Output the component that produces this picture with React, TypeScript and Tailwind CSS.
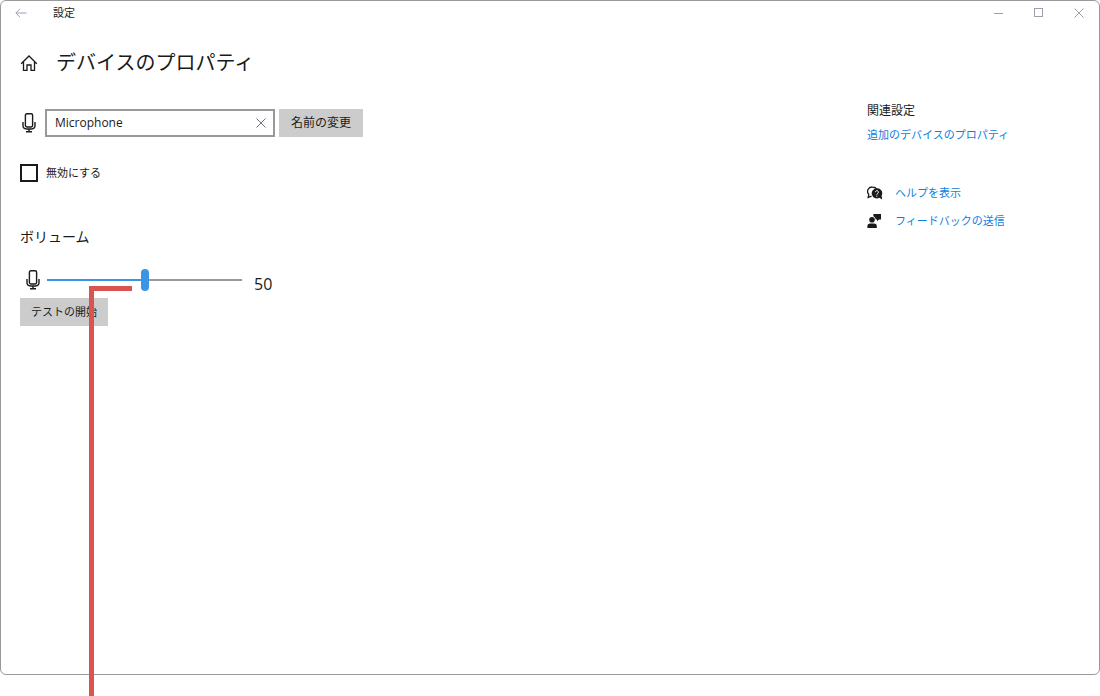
import { useState } from "react";

type IconProps = { className?: string };

function MicIcon({ className }: IconProps) {
  return (
    <svg viewBox="0 0 14 20" className={className} fill="none" stroke="currentColor" strokeWidth="1.4" aria-hidden="true">
      <rect x="3.4" y="0.8" width="7.2" height="13.2" rx="1.4" />
      <path d="M1 9v3.6a3.4 3.4 0 0 0 3.4 3.4h5.2a3.4 3.4 0 0 0 3.4-3.4V9M7 16v2.6M4 18.8h6" />
    </svg>
  );
}

function HomeIcon({ className }: IconProps) {
  return (
    <svg viewBox="0 0 18 18" className={className} fill="none" stroke="currentColor" strokeWidth="1.3" aria-hidden="true">
      <path d="M1.2 9.8 9 2l7.800 7.800M3.500 8v8.300h3.500v-5.300h4v5.300h3.500V8" />
    </svg>
  );
}

function HelpIcon({ className }: IconProps) {
  return (
    <svg viewBox="0 0 16 14" className={className} aria-hidden="true">
      <path d="M4.6 10.2 1.2 11.4l.6-3A4.4 4.4 0 0 1 5.4 1c2 0 3.400.8 4.200 2" fill="none" stroke="currentColor" strokeWidth="1.3" />
      <path d="M9.8 2.2a5.1 5.1 0 1 0 2.4 9.600l3 1.700-.6-3.800A5.1 5.1 0 0 0 9.800 2.200z" fill="currentColor" />
      <path d="M8.4 6.200a1.500 1.500 0 1 1 2.400 1.200c-.6.4-1 .6-1 1.300M9.800 9.600v1.100" fill="none" stroke="#fff" strokeWidth="1" />
    </svg>
  );
}

function FeedbackIcon({ className }: IconProps) {
  return (
    <svg viewBox="0 0 16 16" className={className} fill="currentColor" aria-hidden="true">
      <path d="M6.400 1h7.600v5.400h-2L10 8.200V6.400H8.800A4 4 0 0 0 6.400 3.200z" />
      <circle cx="5" cy="6.800" r="2.800" />
      <path d="M.4 15v-1.800a2.800 2.800 0 0 1 2.800-2.800h3.800a2.800 2.800 0 0 1 2.800 2.800V15z" />
    </svg>
  );
}

function TitleBar() {
  return (
    <header className="flex h-6 items-center text-gray-400">
      <button type="button" aria-label="戻る" className="ml-3 flex h-6 w-4 items-center justify-center">
        <svg viewBox="0 0 12 10" className="h-[10px] w-3" fill="none" stroke="currentColor">
          <path d="M11.5 5H1M5 .8.8 5 5 9.2" />
        </svg>
      </button>
      <span className="ml-6 grow text-[11px] text-[#1a1a1a]">設定</span>
      <button type="button" aria-label="最小化" className="flex h-6 w-10 items-center justify-center">
        <svg viewBox="0 0 10 10" className="size-[10px]" stroke="currentColor">
          <path d="M0 5.5h9" />
        </svg>
      </button>
      <button type="button" aria-label="最大化" className="flex h-6 w-10 items-center justify-center">
        <svg viewBox="0 0 10 10" className="size-[10px]" fill="none" stroke="currentColor">
          <rect x=".5" y=".5" width="8" height="8" />
        </svg>
      </button>
      <button type="button" aria-label="閉じる" className="flex h-6 w-10 items-center justify-center">
        <svg viewBox="0 0 10 10" className="size-[10px]" fill="none" stroke="currentColor">
          <path d="m.5.5 9 9m0-9-9 9" />
        </svg>
      </button>
    </header>
  );
}

export default function App() {
  const [name, setName] = useState("Microphone");
  const [disabled, setDisabled] = useState(false);
  const [volume, setVolume] = useState(50);

  return (
    <div className="relative flex min-h-screen flex-col bg-white pb-[21px] font-['Open_Sans','Noto_Sans_CJK_JP',sans-serif] text-xs text-[#1a1a1a]">
      <div className="flex grow flex-col rounded-md border border-[#999]">
        <TitleBar />

        <div className="flex grow justify-between pl-[19px]">
          <main>
            <div className="mt-[22px] flex h-8 items-center">
              <a href="#home" aria-label="ホーム">
                <HomeIcon className="size-[18px]" />
              </a>
              <h1 className="ml-[18px] text-xl">デバイスのプロパティ</h1>
            </div>

            <form className="mt-[30px] flex items-center" onSubmit={(e) => e.preventDefault()}>
              <MicIcon className="ml-[2px] h-5 w-[14px]" />
              <div className="ml-[9px] flex h-7 w-[230px] items-center border-2 border-[#999]">
                <input
                  type="text"
                  aria-label="デバイス名"
                  value={name}
                  onChange={(e) => setName(e.target.value)}
                  className="w-0 grow px-2 outline-none"
                />
                <button
                  type="button"
                  aria-label="クリア"
                  onClick={() => setName("")}
                  className="flex h-6 w-6 items-center justify-center text-gray-500"
                >
                  <svg viewBox="0 0 10 10" className="size-[10px]" fill="none" stroke="currentColor">
                    <path d="m.5.5 9 9m0-9-9 9" />
                  </svg>
                </button>
              </div>
              <button type="submit" className="ml-1 h-7 bg-[#ccc] px-3">
                名前の変更
              </button>
            </form>

            <label className="mt-6 flex h-6 w-fit items-center gap-2 text-[11px]">
              <input
                type="checkbox"
                checked={disabled}
                onChange={(e) => setDisabled(e.target.checked)}
                className="size-[18px] appearance-none border-2 border-[#1a1a1a] checked:bg-[#3a96e5]"
              />
              無効にする
            </label>

            <h2 className="mt-10 text-sm leading-6">
              <label htmlFor="volume">ボリューム</label>
            </h2>

            <div className="mt-[19px] flex h-6 items-center">
              <MicIcon className="ml-[6px] h-5 w-[14px]" />
              <input
                id="volume"
                type="range"
                min={0}
                max={100}
                value={volume}
                onChange={(e) => setVolume(Number(e.target.value))}
                className="ml-[7px] h-[22px] w-[195px] appearance-none bg-[length:100%_2px] bg-center bg-no-repeat outline-none [&::-webkit-slider-thumb]:h-[22px] [&::-webkit-slider-thumb]:w-2 [&::-webkit-slider-thumb]:appearance-none [&::-webkit-slider-thumb]:rounded-full [&::-webkit-slider-thumb]:bg-[#3a96e5]"
                style={{
                  backgroundImage: `linear-gradient(to right, #3a96e5 ${volume}%, #999 ${volume}%)`,
                }}
              />
              <output htmlFor="volume" className="ml-3 pt-2 text-base">
                {volume}
              </output>
            </div>

            <button type="button" className="mt-[6px] h-7 bg-[#ccc] px-[11px] text-[11px]">
              テストの開始
            </button>
          </main>

          <aside className="w-[232px] pt-[76px]">
            <h2 className="leading-5">関連設定</h2>
            <a href="#properties" className="mt-1 block text-[11px] leading-5 text-[#0f80e0]">
              追加のデバイスのプロパティ
            </a>
            <a href="#help" className="mt-[34px] flex h-7 items-center gap-3 text-[11px] text-[#0f80e0]">
              <HelpIcon className="h-[14px] w-4 text-[#1a1a1a]" />
              ヘルプを表示
            </a>
            <a href="#feedback" className="flex h-7 items-center gap-3 text-[11px] text-[#0f80e0]">
              <FeedbackIcon className="h-4 w-4 text-[#1a1a1a]" />
              フィードバックの送信
            </a>
          </aside>
        </div>
      </div>

      {/* callout line pointing at the volume slider */}
      <div className="pointer-events-none absolute top-[286px] bottom-0 left-[89px] flex w-[43px] flex-col">
        <div className="h-[5px] bg-[#d9534f]" />
        <div className="w-[5px] grow bg-[#d9534f]" />
      </div>
    </div>
  );
}
